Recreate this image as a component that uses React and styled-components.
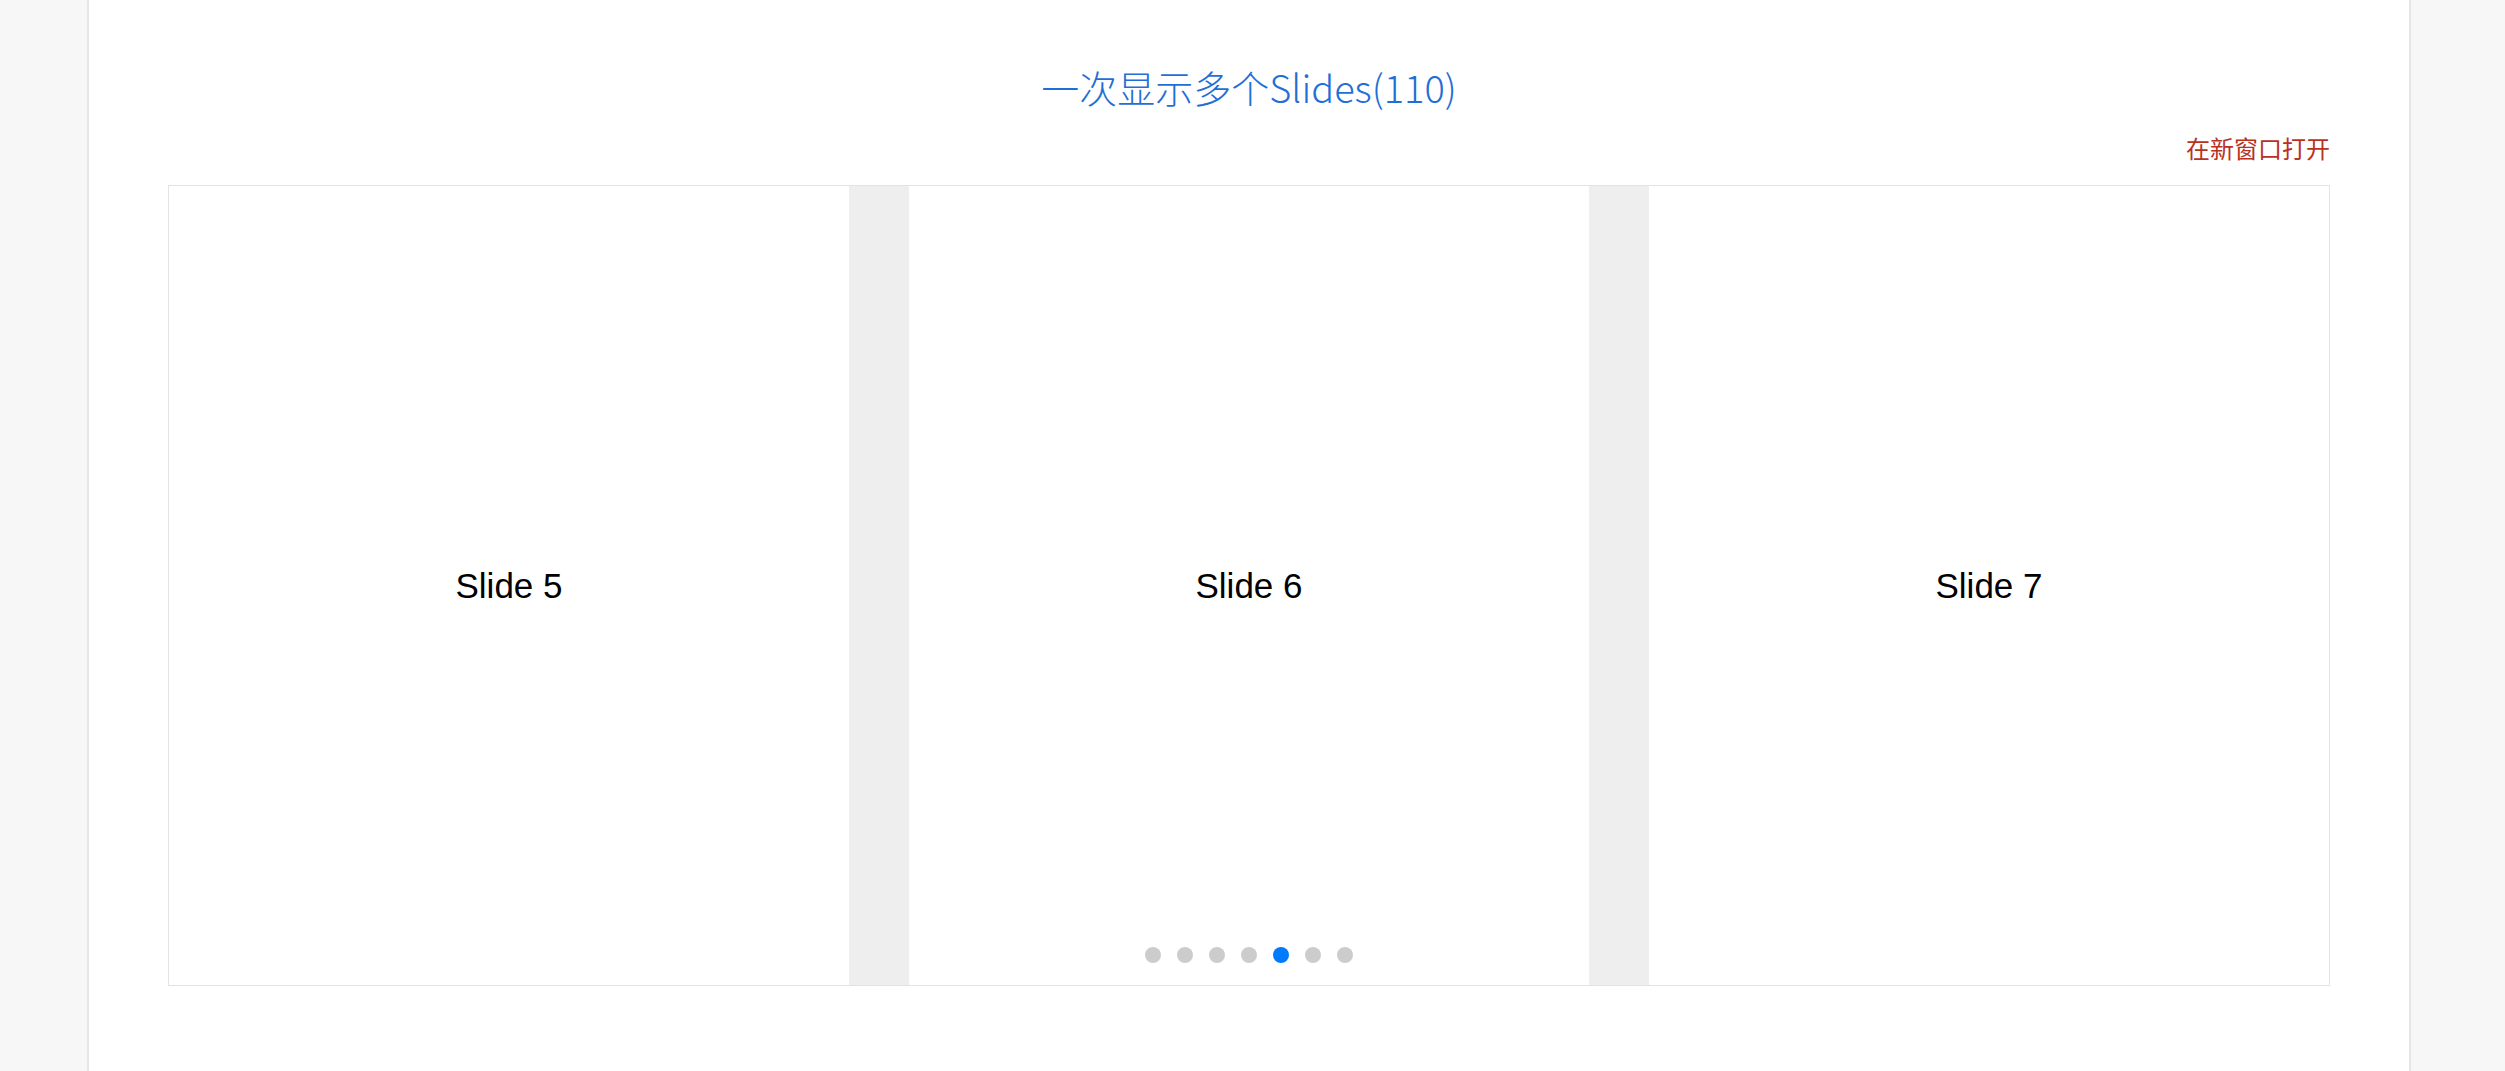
import React from "react";
import styled, { createGlobalStyle } from "styled-components";

const GlobalStyle = createGlobalStyle`
  html, body {
    margin: 0;
    padding: 0;
    background: #f7f7f7;
  }
  body {
    font-family: "Liberation Sans", Arial, "Noto Sans CJK SC", sans-serif;
  }
`;

const Page = styled.div`
  display: flex;
  padding-left: 87px;
  min-height: 1071px;
`;

const Panel = styled.main`
  width: 2324px;
  box-sizing: border-box;
  min-height: 1071px;
  background: #fff;
  border-left: 2px solid #e6e6e6;
  border-right: 2px solid #e6e6e6;
  padding: 64px 79px 0;
`;

const Title = styled.h2`
  margin: 0;
  text-align: center;
  font-family: "Noto Sans CJK SC", "Noto Sans", sans-serif;
  font-weight: 300;
  font-size: 38px;
  line-height: 46px;
  color: #1f6fd6;
`;

const LinkRow = styled.div`
  margin-top: 23px;
  text-align: right;
  line-height: 30px;
`;

const NewWindow = styled.a`
  font-family: "Noto Sans CJK SC", sans-serif;
  font-size: 24px;
  color: #b8321f;
  text-decoration: none;
`;

const Swiper = styled.div`
  position: relative;
  margin-top: 17px;
  height: 801px;
  box-sizing: border-box;
  border: 1px solid #e3e3e3;
  background: #eee;
  display: flex;
  gap: 60px;
`;

const Slide = styled.div`
  flex: 1;
  background: #fff;
  display: flex;
  align-items: center;
  justify-content: center;
  font-size: 35px;
  color: #000;
`;

const Pagination = styled.div`
  position: absolute;
  left: 0;
  right: 0;
  bottom: 22px;
  display: flex;
  justify-content: center;
  gap: 16px;
`;

const Dot = styled.span`
  width: 16px;
  height: 16px;
  border-radius: 50%;
  background: ${({ active }) => (active ? "#007aff" : "#cccccc")};
`;

const slides = [5, 6, 7];
const dots = [0, 1, 2, 3, 4, 5, 6];

export default function App() {
  return (
    <>
      <GlobalStyle />
      <Page>
        <Panel>
          <Title>一次显示多个Slides(110)</Title>
          <LinkRow>
            <NewWindow href="#">在新窗口打开</NewWindow>
          </LinkRow>
          <Swiper>
            {slides.map((n) => (
              <Slide key={n}>Slide {n}</Slide>
            ))}
            <Pagination>
              {dots.map((i) => (
                <Dot key={i} active={i === 4} />
              ))}
            </Pagination>
          </Swiper>
        </Panel>
      </Page>
    </>
  );
}
